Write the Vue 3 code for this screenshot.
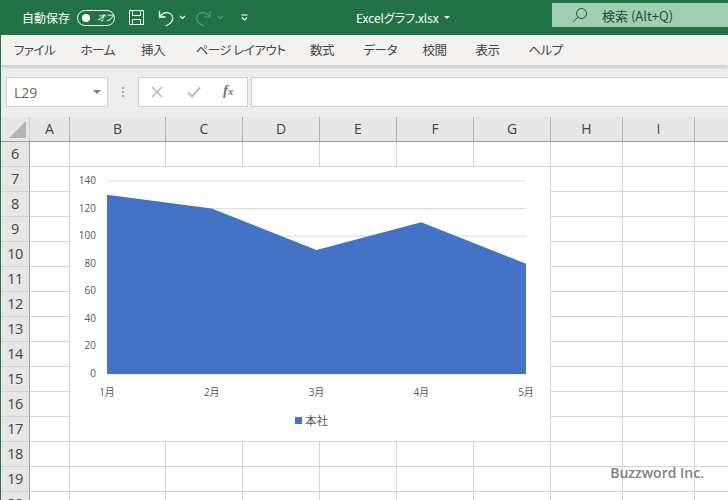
<script setup>
const tabs = [
  { t: 'ファイル', w: 38 }, { t: 'ホーム', w: 32 }, { t: '挿入', w: 26 }, { t: 'ページ レイアウト', w: 86 },
  { t: '数式', w: 25 }, { t: 'データ', w: 30.5 }, { t: '校閲', w: 24.5 }, { t: '表示', w: 24.5 }, { t: 'ヘルプ', w: 32 }
]
const cols = [
  { name: 'A', w: 40 }, { name: 'B', w: 96 }, { name: 'C', w: 77 }, { name: 'D', w: 77 },
  { name: 'E', w: 77 }, { name: 'F', w: 77 }, { name: 'G', w: 77 }, { name: 'H', w: 72 },
  { name: 'I', w: 72 }, { name: '', w: 40 }
]
const rows = [6, 7, 8, 9, 10, 11, 12, 13, 14, 15, 16, 17, 18, 19, 20]
const gridCols = cols.map(c => c.w + 'px').join(' ')

// chart geometry, in chart coordinates (chart box starts at 70,167)
const x0 = 37, x1 = 456, y0 = 207, yTop = 14
const ticks = [0, 20, 40, 60, 80, 100, 120, 140]
const months = ['1月', '2月', '3月', '4月', '5月']
const values = [130, 120, 90, 110, 80]
const yOf = v => y0 - (v / 140) * (y0 - yTop)
const xOf = i => x0 + (i * (x1 - x0)) / 4
const area = `${x0},${y0} ` + values.map((v, i) => `${xOf(i)},${yOf(v)}`).join(' ') + ` ${x1},${y0}`
</script>

<template>
  <div class="xl">
    <div class="title">
      <span class="autosave">自動保存</span>
      <span class="toggle"><i class="knob"></i><em>オフ</em></span>
      <svg class="ic save" width="17" height="17" viewBox="0 0 17 17" fill="none" stroke="#fff" stroke-width="1">
        <path d="M1.5 1.5h14v14h-14z" />
        <path d="M4.5 1.5v5h8v-5M4.5 15.5v-5h8v5" />
      </svg>
      <svg class="ic undo" width="17" height="18" viewBox="0 0 17 18" fill="none" stroke="#fff" stroke-width="1.3">
        <path d="M1.5 2v6h6" />
        <path d="M1.8 7.8C4 4.6 6.5 3.3 9.4 3.6c3.4.4 5.4 3 5.3 5.8-.1 3-2.6 5.5-7 7.6" />
      </svg>
      <svg class="ic caret-s" width="7" height="5" viewBox="0 0 7 5" fill="none" stroke="#fff" stroke-width="1.2"><path d="M1 1l2.5 2.5L6 1" /></svg>
      <svg class="ic redo" width="17" height="18" viewBox="0 0 17 18" fill="none" stroke="#5c9c7c" stroke-width="1.2">
        <path d="M15 2v6H9" />
        <path d="M14.7 7.8C12.5 4.6 10 3.3 7.1 3.6c-3.4.4-5.4 3-5.3 5.8.1 3 2.6 5.5 7 7.6" />
      </svg>
      <svg class="ic caret-d" width="7" height="5" viewBox="0 0 7 5" fill="none" stroke="#5c9c7c" stroke-width="1.2"><path d="M1 1l2.5 2.5L6 1" /></svg>
      <svg class="ic qat" width="7" height="7" viewBox="0 0 7 7" fill="none" stroke="#fff" stroke-width="1.1">
        <path d="M0.5 1h6" /><path d="M0.8 3.5L3.5 6l2.7-2.5" />
      </svg>
      <span class="file">Excelグラフ.xlsx</span>
      <svg class="file-caret" width="6" height="3" viewBox="0 0 6 3"><path d="M0 0h6L3 3z" fill="#fff" /></svg>
      <div class="search">
        <svg width="16" height="16" viewBox="0 0 16 16" fill="none" stroke="#1f4d36" stroke-width="1">
          <circle cx="9.5" cy="6.5" r="5" /><path d="M6 10.2L1 15.2" />
        </svg>
        <span>検索 (Alt+Q)</span>
      </div>
    </div>

    <div class="tabs">
      <span v-for="t in tabs" :key="t.t" class="tab" :style="{ width: t.w + 'px' }">{{ t.t }}</span>
    </div>

    <div class="fbar">
      <div class="namebox">
        <span>L29</span>
        <svg width="8" height="4" viewBox="0 0 8 4"><path d="M0 0h8L4 4z" fill="#777" /></svg>
      </div>
      <div class="dots"><i></i><i></i><i></i></div>
      <div class="fx-btns">
        <svg width="12" height="12" viewBox="0 0 12 12" fill="none" stroke="#bdbdbd" stroke-width="1.6"><path d="M1 1l10 10M11 1L1 11" /></svg>
        <svg width="14" height="12" viewBox="0 0 14 12" fill="none" stroke="#bdbdbd" stroke-width="2"><path d="M1 6.5l4 4L13 1.5" /></svg>
        <span class="fx">f<span>x</span></span>
      </div>
      <div class="formula"></div>
    </div>

    <div class="sheet">
      <div class="head">
        <div class="corner"><svg width="17" height="17" viewBox="0 0 17 17"><path d="M17 0v17H0z" fill="#b4b4b4" /></svg></div>
        <div class="col-heads" :style="{ gridTemplateColumns: gridCols }">
          <div v-for="c in cols" :key="c.name" class="col-head">{{ c.name }}</div>
        </div>
      </div>
      <div v-for="r in rows" :key="r" class="row">
        <div class="row-head">{{ r }}</div>
        <div class="cells" :style="{ gridTemplateColumns: gridCols }">
          <div v-for="c in cols" :key="c.name" class="cell"></div>
        </div>
      </div>

      <div class="chart">
        <svg width="480" height="274" viewBox="0 0 480 274">
          <g v-for="t in ticks" :key="t">
            <line :x1="x0" :x2="x1" :y1="yOf(t)" :y2="yOf(t)" stroke="#d9d9d9" />
            <text class="lbl" :x="x0 - 11" :y="yOf(t) + 3" text-anchor="end">{{ t }}</text>
          </g>
          <polygon :points="area" fill="#4472c4" />
          <text v-for="(m, i) in months" :key="m" class="lbl" :x="xOf(i)" y="229" text-anchor="middle">{{ m }}</text>
          <rect x="225" y="250" width="7" height="7" fill="#4472c4" />
          <text class="lgd" x="235" y="258">本社</text>
        </svg>
      </div>

      <div class="mark">Buzzword Inc.</div>
    </div>
  </div>
</template>

<style scoped>
.xl {
  width: 728px;
  height: 500px;
  overflow: hidden;
  display: flex;
  flex-direction: column;
  background: #e9e9e9;
  font-family: "Noto Sans CJK JP", "Open Sans", sans-serif;
  font-feature-settings: "palt";
  border-left: 1px solid #217346;
  box-sizing: border-box;
}

/* title bar */
.title {
  height: 35px;
  flex: none;
  margin-left: -1px;
  background: #217346;
  color: #fff;
  display: flex;
  align-items: center;
  font-size: 12px;
}
.autosave { margin-left: 22px; white-space: nowrap; width: 48px; }
.toggle {
  margin-left: 7px;
  width: 36px;
  height: 14px;
  border: 1px solid #fff;
  border-radius: 8px;
  display: flex;
  align-items: center;
  box-sizing: content-box;
  flex: none;
}
.knob {
  width: 8px;
  height: 8px;
  margin-left: 4px;
  border-radius: 50%;
  background: #fff;
  flex: none;
}
.toggle em {
  font-style: italic;
  font-size: 9px;
  margin-left: 7px;
  line-height: 1;
  white-space: nowrap;
}
.ic { flex: none; }
.save { margin-left: 13px; }
.undo { margin-left: 13px; }
.caret-s { margin-left: 4px; }
.redo { margin-left: 9px; }
.caret-d { margin-left: 5px; }
.qat { margin-left: 17px; }
.file { margin-left: 108px; font-size: 12px; letter-spacing: -0.1px; white-space: nowrap; }
.file-caret { margin-left: 5px; }
.search {
  margin-left: auto;
  width: 176px;
  height: 24px;
  margin-top: -5px;
  background: #9fcfb2;
  color: #1f4d36;
  display: flex;
  align-items: center;
  font-size: 13px;
}
.search svg { margin-left: 20px; }
.search span { margin-left: 14px; }

/* ribbon tabs */
.tabs {
  height: 30px;
  flex: none;
  background: #f3f2f1;
  display: flex;
  align-items: center;
  padding-left: 13px;
  padding-bottom: 2px;
  box-sizing: border-box;
  gap: 28.5px;
  font-size: 12.5px;
  letter-spacing: -0.5px;
  color: #444;
  box-shadow: 0 2px 4px rgba(0, 0, 0, 0.18);
  position: relative;
}
.tab { white-space: nowrap; }

/* formula bar */
.fbar {
  height: 52px;
  flex: none;
  display: flex;
  align-items: center;
  padding-top: 2px;
  box-sizing: border-box;
  background: #eceded;
}
.namebox {
  margin-left: 5px;
  width: 102px;
  height: 30px;
  background: #fff;
  border: 1px solid #d0d0d0;
  box-sizing: border-box;
  display: flex;
  align-items: center;
  justify-content: space-between;
  padding: 0 6px 0 7px;
  font-family: "Open Sans", sans-serif;
  font-size: 14px;
  color: #666;
}
.dots {
  width: 30px;
  display: flex;
  flex-direction: column;
  align-items: center;
  gap: 2px;
}
.dots i { width: 2px; height: 2px; background: #aaa; }
.fx-btns {
  width: 110px;
  height: 30px;
  background: #fff;
  border: 1px solid #d0d0d0;
  box-sizing: border-box;
  display: flex;
  align-items: center;
  padding-left: 12px;
  gap: 24px;
}
.fx {
  font-family: "Liberation Serif", serif;
  font-style: italic;
  font-weight: 700;
  font-size: 15px;
  color: #777;
  margin-left: -2px;
  padding-bottom: 3px;
}
.fx span { font-size: 11px; }
.formula {
  margin-left: 3px;
  flex: 1;
  height: 30px;
  background: #fff;
  border: 1px solid #d0d0d0;
  border-right: 0;
  box-sizing: border-box;
}

/* sheet */
.sheet {
  position: relative;
  flex: 1;
  background: #fff;
  overflow: hidden;
}
.head {
  display: flex;
  height: 25px;
  background: #e6e6e6;
  border-bottom: 1px solid #9c9c9c;
  box-sizing: border-box;
}
.corner {
  width: 29px;
  flex: none;
  display: flex;
  align-items: flex-end;
  justify-content: flex-end;
  padding: 0 3px 3px 0;
  box-sizing: border-box;
  border-right: 1px solid #d0d0d0;
}
.col-heads { display: grid; }
.col-head {
  border-right: 1px solid #b0b0b0;
  box-sizing: border-box;
  display: flex;
  align-items: center;
  justify-content: center;
  font-family: "Open Sans", sans-serif;
  font-size: 14px;
  color: #444;
  height: 24px;
  padding-bottom: 2px;
}
.row { display: flex; height: 25px; }
.row-head {
  width: 29px;
  flex: none;
  background: #e6e6e6;
  border-right: 1px solid #9c9c9c;
  border-bottom: 1px solid #d0d0d0;
  box-sizing: border-box;
  display: flex;
  align-items: center;
  justify-content: center;
  padding-bottom: 2px;
  font-family: "Open Sans", sans-serif;
  font-size: 14.5px;
  letter-spacing: -0.5px;
  color: #444;
}
.cells { display: grid; }
.cell {
  border-right: 1px solid #d4d4d4;
  border-bottom: 1px solid #d4d4d4;
  box-sizing: border-box;
}

/* chart floats over the cells */
.chart {
  position: absolute;
  left: 69px;
  top: 50px;
  width: 480px;
  height: 274px;
  background: #fff;
}
.chart svg { display: block; }
.lbl {
  font-family: "Open Sans", "Noto Sans CJK JP", sans-serif;
  font-size: 10px;
  fill: #595959;
}
.lgd {
  font-family: "Noto Sans CJK JP", sans-serif;
  font-size: 11.5px;
  fill: #595959;
}
.mark {
  position: absolute;
  right: 24px;
  bottom: 18px;
  font-family: "Open Sans", sans-serif;
  font-size: 14px;
  font-weight: 600;
  color: rgba(90, 90, 90, 0.8);
  white-space: nowrap;
}
</style>
